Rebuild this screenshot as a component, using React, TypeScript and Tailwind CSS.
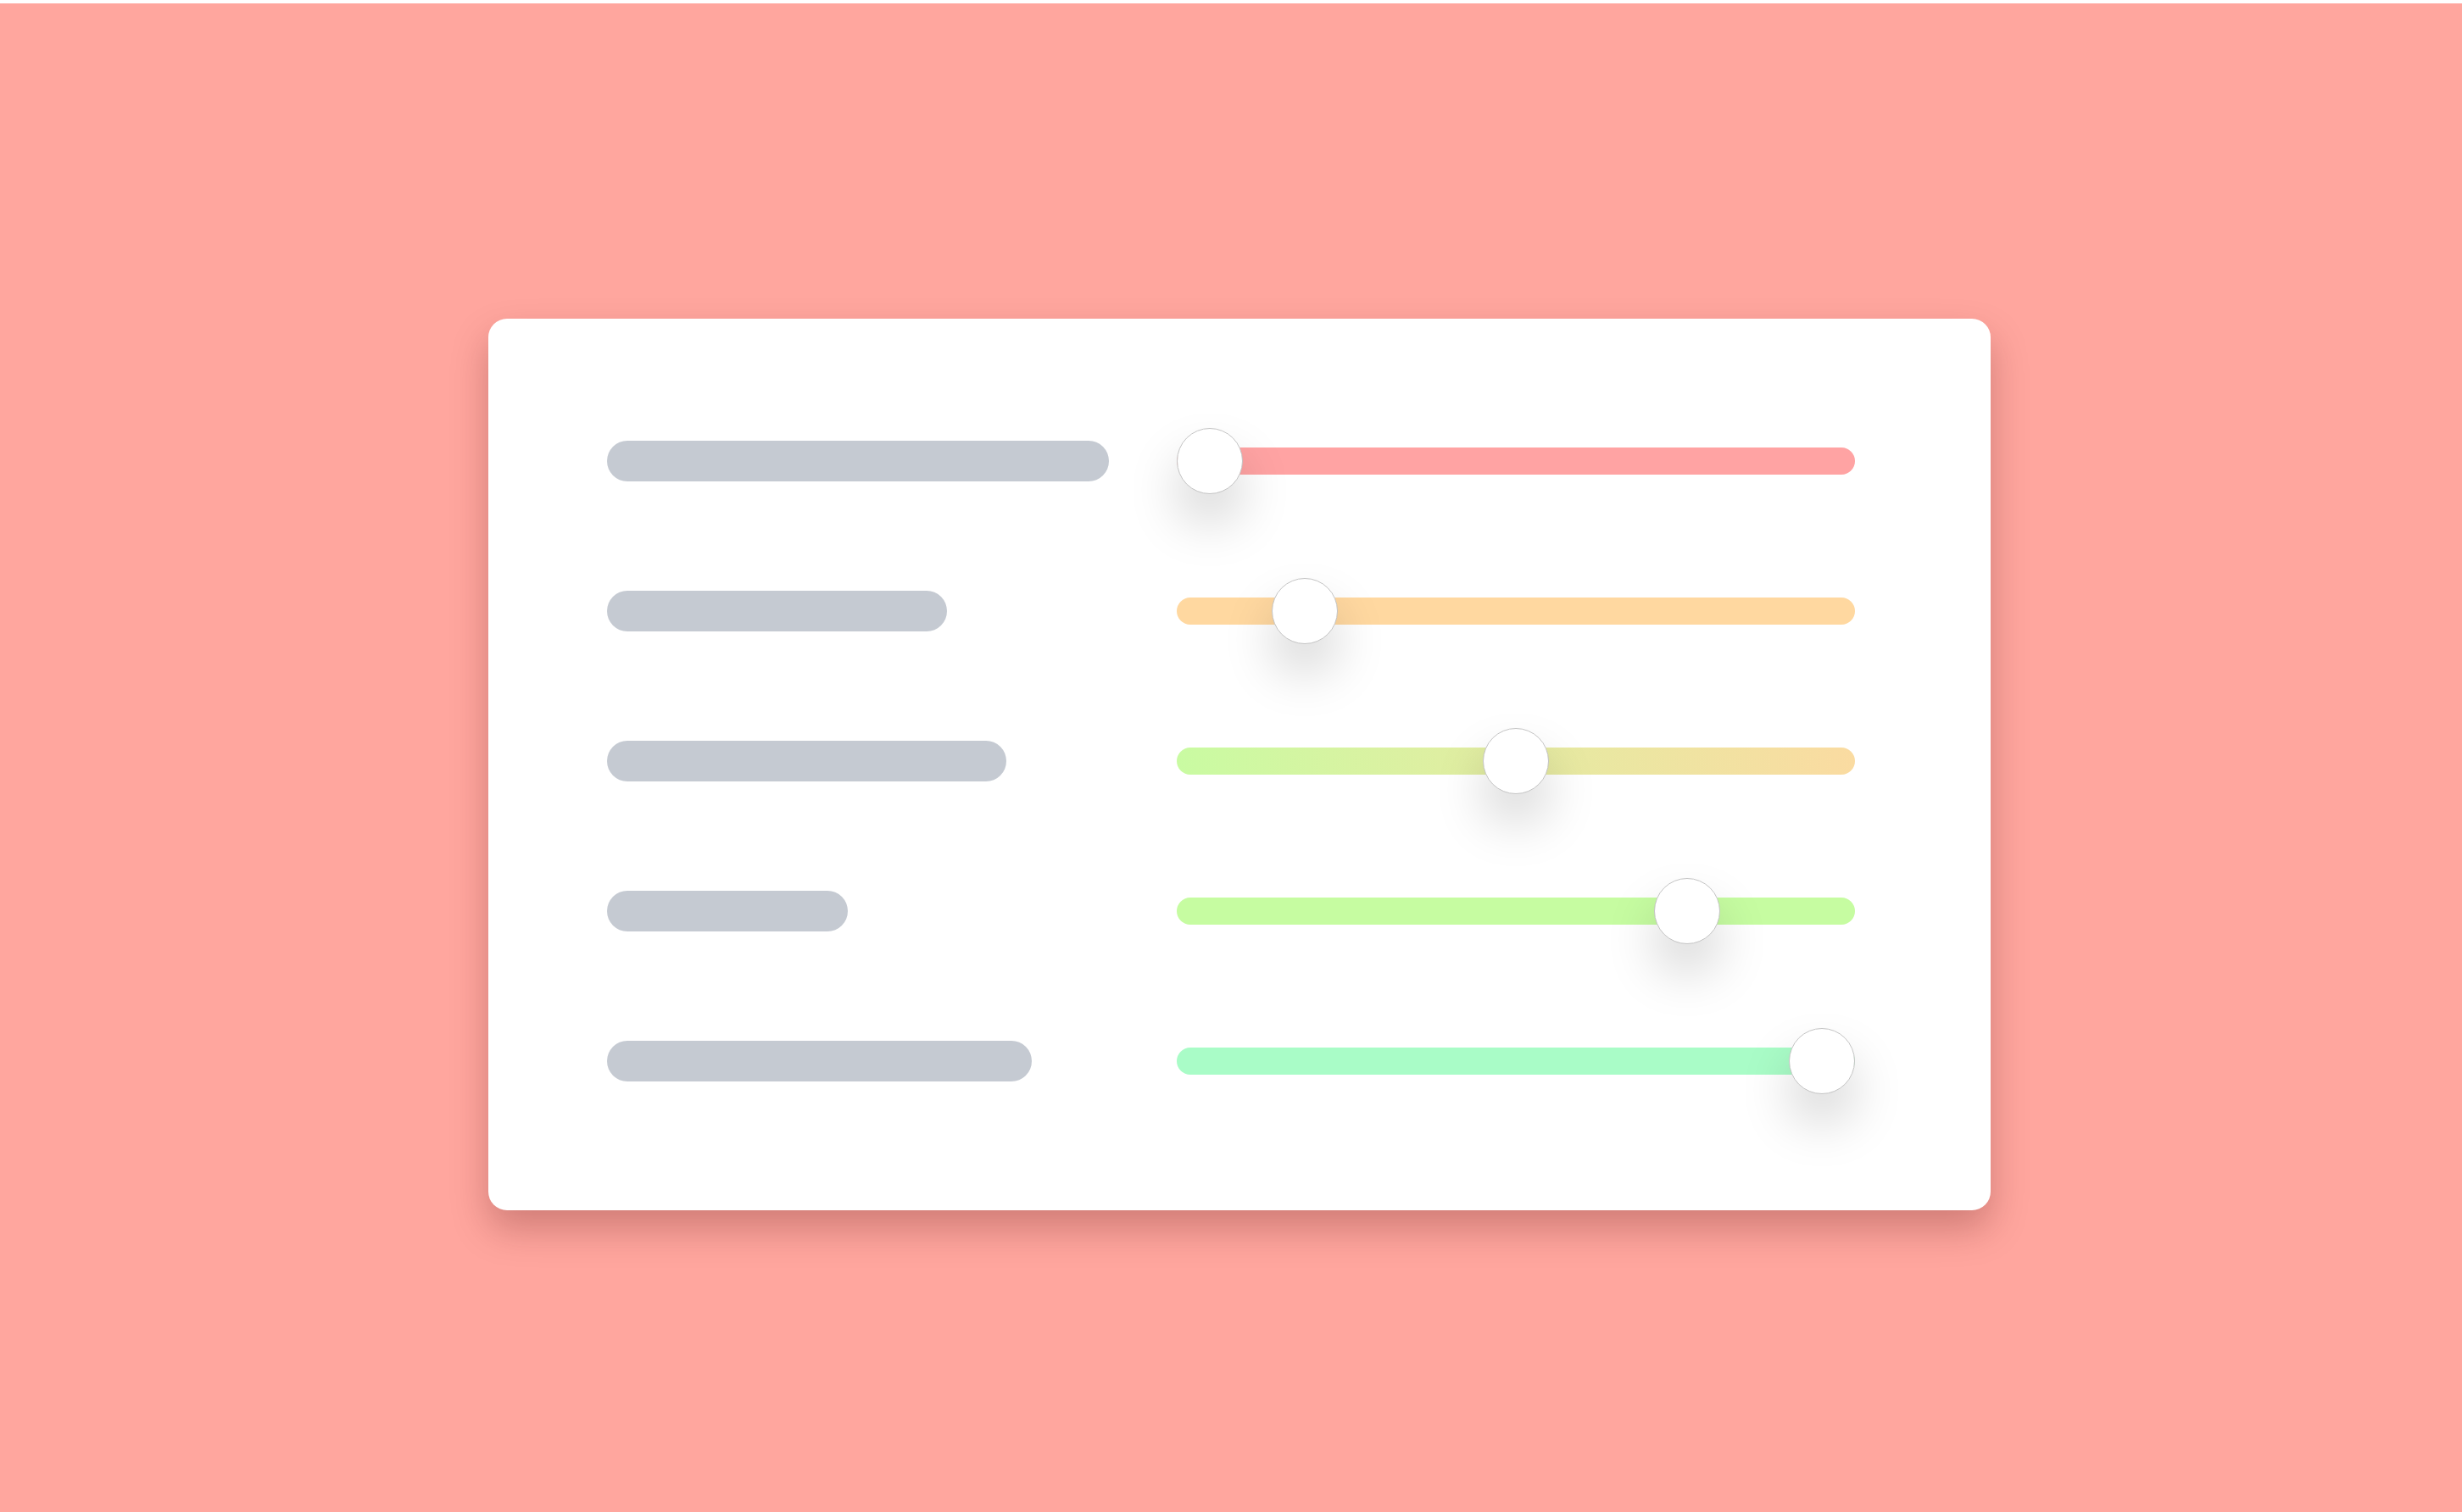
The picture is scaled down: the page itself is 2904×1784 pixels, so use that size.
const rows = [
  { bar: 592, value: 0, track: "bg-[#ffa3a3]" },
  { bar: 401, value: 15.5, track: "bg-[#ffd8a0]" },
  { bar: 471, value: 50, track: "bg-gradient-to-r from-[#c9fba2] to-[#fadba1]" },
  { bar: 284, value: 78, track: "bg-[#c6fca1]" },
  { bar: 501, value: 100, track: "bg-[#a9fcc7]" },
];

function Slider({ value, track }: { value: number; track: string }) {
  return (
    <div className="relative h-[78px] w-[800px] flex items-center">
      <div className={`h-[32px] w-full rounded-full ${track}`}></div>
      {/* thumb sits over the track */}
      <div
        className="absolute top-0 h-[78px] w-[78px] rounded-full bg-white border border-[#c4c4c4] shadow-[0_34px_60px_rgba(0,0,0,0.17)]"
        style={{ left: `${(value / 100) * 722}px` }}
      ></div>
    </div>
  );
}

export default function App() {
  return (
    <div className="min-h-[1784px] w-[2904px] bg-white pt-[4px]">
      <div className="h-[1780px] bg-[#ffa69e] pl-[576px] pt-[372px]">
        <div className="w-[1772px] h-[1052px] bg-white rounded-[22px] shadow-[0_22px_44px_rgba(90,20,20,0.28)] pl-[140px] pt-[79px]">
          {rows.map((r, i) => (
            <div key={i} className="h-[177px] flex items-center">
              <div className="w-[672px]">
                <div
                  className="h-[48px] rounded-full bg-[#c5cad2]"
                  style={{ width: `${r.bar}px` }}
                ></div>
              </div>
              <Slider value={r.value} track={r.track} />
            </div>
          ))}
        </div>
      </div>
    </div>
  );
}
